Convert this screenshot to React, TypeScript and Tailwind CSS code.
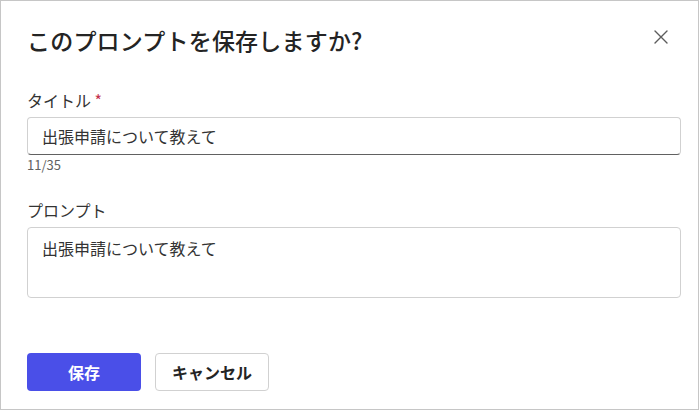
import React from 'react';

const font = { fontFamily: '"Noto Sans CJK JP", "Noto Sans", sans-serif' };

export default function App() {
  return (
    <div className="w-[700px] h-[411px] bg-white" style={font}>
      <div className="w-[699px] h-[410px] border border-[#c6c6c6] bg-white pl-[26px] pr-[17px] pt-[23px] flex flex-col text-[#242424]">
        {/* Header */}
        <div className="flex items-center justify-between h-[32px]">
          <h1 className="text-[23px] leading-[32px] font-medium tracking-[0.2px]">このプロンプトを保存しますか?</h1>
          <button className="w-[28px] h-[28px] flex items-center justify-center mr-[6px] mt-[-6px]" aria-label="閉じる">
            <svg width="14" height="14" viewBox="0 0 14 14" fill="none">
              <path d="M1 1L13 13M13 1L1 13" stroke="#5c5c5c" strokeWidth="1.4" strokeLinecap="round" />
            </svg>
          </button>
        </div>

        {/* Title field */}
        <label className="mt-[33px] text-[16px] leading-[22px] text-[#333333]">
          タイトル <span className="text-[#c4314b]">*</span>
        </label>
        <div className="mt-[6px] h-[38px] rounded-[4px] border border-[#d1d1d1] border-b-[#616161] flex items-center pl-[14px] text-[16px] text-[#333333]">
          出張申請について教えて
        </div>
        <div className="mt-[2px] text-[13px] leading-[16px] text-[#616161]">11/35</div>

        {/* Prompt field */}
        <label className="mt-[26px] text-[16px] leading-[22px] text-[#333333]">プロンプト</label>
        <div className="mt-[6px] h-[71px] rounded-[4px] border border-[#d1d1d1] pl-[14px] pt-[9px] text-[16px] leading-[22px] text-[#333333]">
          出張申請について教えて
        </div>

        {/* Footer */}
        <div className="mt-[55px] flex gap-[14px]">
          <button className="w-[114px] h-[38px] rounded-[4px] bg-[#4a4fe8] text-white text-[16px] font-bold">保存</button>
          <button className="w-[114px] h-[38px] rounded-[4px] border border-[#d1d1d1] bg-white text-[#242424] text-[16px] font-bold">キャンセル</button>
        </div>
      </div>
    </div>
  );
}
